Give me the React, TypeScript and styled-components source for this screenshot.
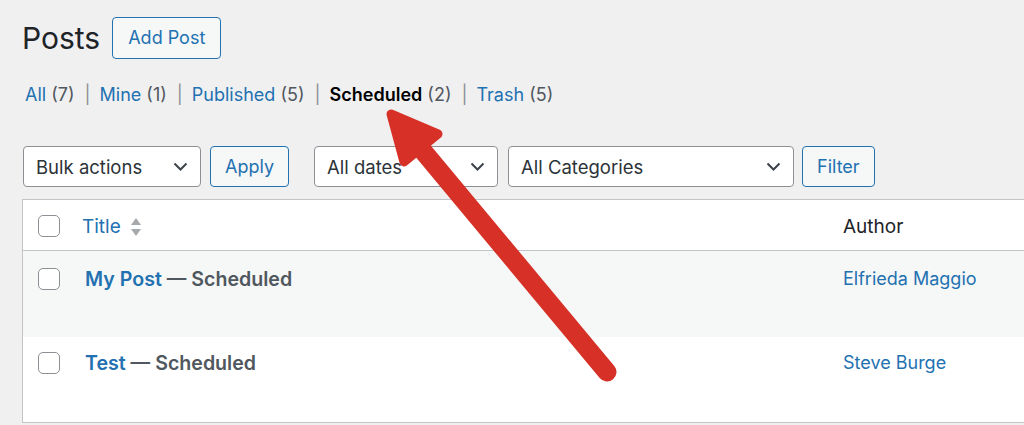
import styled, { createGlobalStyle } from "styled-components";

const GlobalStyle = createGlobalStyle`
  html, body {
    margin: 0;
    padding: 0;
    background: #f0f0f1;
    overflow: hidden;
  }
  body {
    font-family: Inter, "Noto Sans", "Liberation Sans", sans-serif;
    color: #3c434a;
  }
`;

const Page = styled.div`
  position: relative;
  width: 1024px;
  height: 425px;
  padding-left: 22px;
  box-sizing: border-box;
`;

const Header = styled.div`
  display: flex;
  align-items: center;
  gap: 12px;
  padding-top: 17px;
`;

const Heading = styled.h1`
  margin: 0;
  font-size: 30px;
  font-weight: 400;
  color: #1d2327;
  line-height: 40px;
`;

const OutlineButton = styled.button`
  height: 42px;
  padding: 0 ${({ $pad }: { $pad?: number }) => $pad ?? 14}px;
  border: 1px solid #2271b1;
  border-radius: 4px;
  background: #f6f7f7;
  color: #2271b1;
  font-family: inherit;
  font-size: 18px;
  line-height: 40px;
`;

const Views = styled.ul`
  display: flex;
  list-style: none;
  margin: 23px 0 0;
  padding: 0 0 0 3px;
  font-size: 18px;
  line-height: 26px;
`;

const View = styled.li`
  color: #50575e;
  white-space: pre;
`;

const ViewLink = styled.span<{ $current?: boolean }>`
  color: ${({ $current }) => ($current ? "#000" : "#2271b1")};
  font-weight: ${({ $current }) => ($current ? 600 : 400)};
`;

const Sep = styled.span`
  color: #8c8f94;
  padding: 0 9px 0 10px;
`;

const Toolbar = styled.div`
  display: flex;
  align-items: center;
  margin-top: 38px;
  padding-left: 1px;
`;

const Select = styled.div<{ $w: number; $gap: number }>`
  display: flex;
  align-items: center;
  justify-content: space-between;
  width: ${({ $w }) => $w}px;
  height: 41px;
  box-sizing: border-box;
  padding: 0 12px 0 12px;
  margin-right: ${({ $gap }) => $gap}px;
  border: 1px solid #8c8f94;
  border-radius: 4px;
  background: #fff;
  color: #2c3338;
  font-size: 18.5px;
`;

const ToolButton = styled(OutlineButton)<{ $gap: number }>`
  height: 41px;
  margin-right: ${({ $gap }) => $gap}px;
`;

const Table = styled.div`
  margin-top: 12px;
  width: 1040px;
  border: 1px solid #c3c4c7;
  background: #fff;
`;

const Row = styled.div<{ $head?: boolean; $alt?: boolean; $h: number; $pt: number }>`
  display: grid;
  grid-template-columns: 59px 761px 1fr;
  align-items: ${({ $head }) => ($head ? "center" : "start")};
  height: ${({ $h }) => $h}px;
  box-sizing: border-box;
  padding-top: ${({ $pt }) => $pt}px;
  background: ${({ $alt }) => ($alt ? "#f6f7f7" : "#fff")};
  border-bottom: ${({ $head }) => ($head ? "1px solid #c3c4c7" : "none")};
  font-size: 17px;
  line-height: 26px;
`;

const CheckCell = styled.div<{ $head?: boolean }>`
  padding-left: 15px;
  margin-top: ${({ $head }) => ($head ? -2 : 2)}px;
  display: flex;
`;

const Checkbox = styled.span`
  width: 22px;
  height: 22px;
  box-sizing: border-box;
  border: 1px solid #8c8f94;
  border-radius: 5px;
  background: #fff;
`;

const HeadTitle = styled.div`
  display: flex;
  align-items: center;
  gap: 9px;
  color: #2271b1;
  font-size: 19px;
`;

const HeadAuthor = styled.div`
  color: #1d2327;
  font-size: 19px;
`;

const RowTitle = styled.div`
  padding-left: 3px;
  font-size: 19.6px;
  font-weight: 600;
  color: #50575e;
`;

const TitleLink = styled.span`
  color: #2271b1;
`;

const AuthorLink = styled.div`
  color: #2271b1;
  font-size: 18px;
`;

const ArrowLayer = styled.svg`
  position: absolute;
  left: 0;
  top: 0;
  pointer-events: none;
`;

const Chevron = () => (
  <svg width="15" height="9" viewBox="0 0 15 9">
    <path d="M1.5 1.5l6 6 6-6" fill="none" stroke="#3c434a" strokeWidth="2" />
  </svg>
);

const SortIcon = () => (
  <svg width="12" height="20" viewBox="0 0 12 20">
    <path d="M6 1l5 7H1z" fill="#a7aaad" />
    <path d="M6 19l5-7H1z" fill="#a7aaad" />
  </svg>
);

const views = [
  { label: "All", count: 7 },
  { label: "Mine", count: 1 },
  { label: "Published", count: 5 },
  { label: "Scheduled", count: 2, current: true },
  { label: "Trash", count: 5 },
];

const posts = [
  { title: "My Post", author: "Elfrieda Maggio", h: 86, pt: 15 },
  { title: "Test", author: "Steve Burge", h: 85, pt: 13 },
];

const App = () => (
  <Page>
    <GlobalStyle />
    <Header>
      <Heading>Posts</Heading>
      <OutlineButton $pad={15}>Add Post</OutlineButton>
    </Header>
    <Views>
      {views.map((v, i) => (
        <View key={v.label}>
          <ViewLink $current={v.current}>{v.label}</ViewLink> ({v.count})
          {i < views.length - 1 && <Sep>|</Sep>}
        </View>
      ))}
    </Views>
    <Toolbar>
      <Select $w={178} $gap={9}>
        Bulk actions <Chevron />
      </Select>
      <ToolButton $gap={25}>Apply</ToolButton>
      <Select $w={184} $gap={10}>
        All dates <Chevron />
      </Select>
      <Select $w={286} $gap={8}>
        All Categories <Chevron />
      </Select>
      <ToolButton $gap={0}>Filter</ToolButton>
    </Toolbar>
    <Table>
      <Row $head $h={51} $pt={4}>
        <CheckCell $head>
          <Checkbox />
        </CheckCell>
        <HeadTitle>
          Title <SortIcon />
        </HeadTitle>
        <HeadAuthor>Author</HeadAuthor>
      </Row>
      {posts.map((p, i) => (
        <Row key={p.title} $alt={i % 2 === 0} $h={p.h} $pt={p.pt}>
          <CheckCell>
            <Checkbox />
          </CheckCell>
          <RowTitle>
            <TitleLink>{p.title}</TitleLink> — Scheduled
          </RowTitle>
          <AuthorLink>{p.author}</AuthorLink>
        </Row>
      ))}
    </Table>
    <ArrowLayer width="1024" height="425" viewBox="0 0 1024 425">
      <line
        x1="418"
        y1="145"
        x2="607"
        y2="372"
        stroke="#d63027"
        strokeWidth="19"
        strokeLinecap="round"
      />
      <polygon
        points="391,114 438,134 404,162"
        fill="#d63027"
        stroke="#d63027"
        strokeWidth="9"
        strokeLinejoin="round"
      />
    </ArrowLayer>
  </Page>
);

export default App;
